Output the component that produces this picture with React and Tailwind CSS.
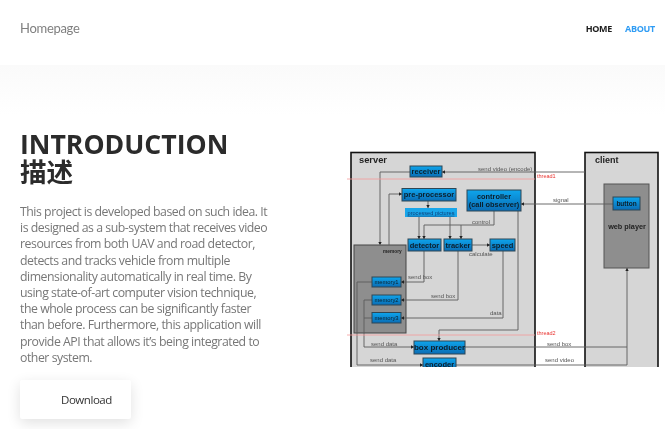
import React from "react";

function Box({x, y, w, h, label, size = 7.5, bold = true}) {
    return (
        <g>
            <rect x={x} y={y} width={w} height={h} fill="url(#blue)" stroke="#2f4654" strokeWidth="1"/>
            <text x={x + w / 2} y={y + h / 2 + size * 0.35} textAnchor="middle" fontSize={size}
                  fontWeight={bold ? "700" : "400"} fill="#0b1f2c">{label}</text>
        </g>
    )
}

function Label({x, y, children, color = "#555", size = 6}) {
    return <text x={x} y={y} fontSize={size} fill={color}>{children}</text>
}

// small arrow head, dir is the way it points
function Head({x, y, dir}) {
    const pts = {
        r: `${x},${y} ${x - 3},${y - 1.7} ${x - 3},${y + 1.7}`,
        l: `${x},${y} ${x + 3},${y - 1.7} ${x + 3},${y + 1.7}`,
        d: `${x},${y} ${x - 1.7},${y - 3} ${x + 1.7},${y - 3}`,
        u: `${x},${y} ${x - 1.7},${y + 3} ${x + 1.7},${y + 3}`,
    }
    return <polygon points={pts[dir]} fill="#222"/>
}

function Diagram() {
    return (
        <svg viewBox="345 150 320 218" width="320" height="218"
             className="block shrink-0 mt-[19px] blur-[0.5px] font-['Liberation_Sans',sans-serif]">
            <defs>
                <linearGradient id="blue" x1="0" y1="0" x2="0" y2="1">
                    <stop offset="0" stopColor="#0ea5ec"/>
                    <stop offset="1" stopColor="#0a6cb4"/>
                </linearGradient>
            </defs>

            <rect x="351" y="153.5" width="184" height="230" fill="#d6d6d6" stroke="#111" strokeWidth="1.6"/>
            <rect x="585" y="153.5" width="73" height="230" fill="#d6d6d6" stroke="#111" strokeWidth="1.6"/>
            <rect x="604" y="185" width="45" height="84" fill="#8e8e8e" stroke="#555" strokeWidth="1"/>
            <rect x="354" y="246" width="52" height="88" fill="#8e8e8e" stroke="#444" strokeWidth="1"/>

            <text x="359" y="164" fontSize="9.3" fontWeight="700" fill="#222">server</text>
            <text x="595" y="164" fontSize="9" fontWeight="700" fill="#222">client</text>
            <text x="627" y="230" fontSize="7.3" fontWeight="700" fill="#222" textAnchor="middle">web player</text>
            <text x="383" y="254" fontSize="4.8" fontWeight="700" fill="#222">memory</text>

            <g fill="none" stroke="#5c5c5c" strokeWidth="0.9">
                <path d="M585 173H442"/>
                <path d="M410 173H380V245"/>
                <path d="M389 246V195H402"/>
                <path d="M428 202V209"/>
                <path d="M419 218V240"/>
                <path d="M450 218V240"/>
                <path d="M494 212V226H424V240"/>
                <path d="M461 226V240"/>
                <path d="M472 246H490"/>
                <path d="M613 205H521"/>
                <path d="M424 252V283H401"/>
                <path d="M458 252V301H401"/>
                <path d="M503 252V319H401"/>
                <path d="M518 212V331H439V342"/>
                <path d="M372 283H357V366H423"/>
                <path d="M372 301H364V348H414"/>
                <path d="M372 319H364"/>
                <path d="M465 348H627"/>
                <path d="M456 366H627V269"/>
            </g>
            <path d="M347 180H535" stroke="#f59a9a" strokeWidth="0.8"/>
            <path d="M347 336H535" stroke="#f59a9a" strokeWidth="0.8"/>

            <Head x={442} y={173} dir="l"/>
            <Head x={380} y={246} dir="d"/>
            <Head x={402} y={195} dir="r"/>
            <Head x={428} y={209} dir="d"/>
            <Head x={419} y={240} dir="d"/>
            <Head x={450} y={240} dir="d"/>
            <Head x={424} y={240} dir="d"/>
            <Head x={461} y={240} dir="d"/>
            <Head x={490} y={246} dir="r"/>
            <Head x={521} y={205} dir="l"/>
            <Head x={401} y={283} dir="l"/>
            <Head x={401} y={301} dir="l"/>
            <Head x={401} y={319} dir="l"/>
            <Head x={439} y={342} dir="d"/>
            <Head x={423} y={366} dir="r"/>
            <Head x={414} y={348} dir="r"/>
            <Head x={627} y={269} dir="u"/>

            <Box x={410} y={167} w={32} h={11} label="receiver"/>
            <Box x={402} y={189.5} w={54} h={12.5} label="pre-processor"/>
            <rect x="405" y="209" width="52" height="9" fill="#19a6ea"/>
            <text x="431" y="215.8" textAnchor="middle" fontSize="5.6" fill="#0d3f78" textDecoration="underline">processed pictures</text>
            <rect x="467" y="191" width="54" height="21" fill="url(#blue)" stroke="#2f4654"/>
            <text x="494" y="199.5" textAnchor="middle" fontSize="7.4" fontWeight="700" fill="#0b1f2c">controller</text>
            <text x="494" y="208" textAnchor="middle" fontSize="7.4" fontWeight="700" fill="#0b1f2c">(call observer)</text>
            <Box x={613} y={198} w={27} h={13} label="button" size={6.5}/>
            <Box x={408} y={240} w={33} h={12} label="detector"/>
            <Box x={444} y={240} w={28} h={12} label="tracker"/>
            <Box x={490} y={240} w={25} h={12} label="speed"/>
            <Box x={372} y={278} w={29} h={10} label="memory1" size={5.8} bold={false}/>
            <Box x={372} y={296} w={29} h={10} label="memory2" size={5.8} bold={false}/>
            <Box x={372} y={313.5} w={29} h={10.5} label="memory3" size={5.8} bold={false}/>
            <Box x={414} y={342} w={51} h={13} label="box producer" size={8}/>
            <Box x={423} y={359} w={33} h={13} label="encoder"/>

            <Label x={478} y={172}>send video (encode)</Label>
            <Label x={553} y={203}>signal</Label>
            <Label x={472} y={225}>control</Label>
            <Label x={469} y={257}>calculate</Label>
            <Label x={408} y={280}>send  box</Label>
            <Label x={431} y={299}>send box</Label>
            <Label x={490} y={316}>data</Label>
            <Label x={371} y={347}>send data</Label>
            <Label x={370} y={363}>send data</Label>
            <Label x={547} y={347}>send box</Label>
            <Label x={545} y={363}>send video</Label>
            <Label x={537} y={179} color="#e8322e" size={5.5}>thread1</Label>
            <Label x={537} y={336} color="#e8322e" size={5.5}>thread2</Label>
        </svg>
    )
}

export default function App() {
    return (
        <div className="h-screen overflow-hidden bg-white font-['Open_Sans',sans-serif] blur-[0.4px]">
            <header className="h-[65px] pb-2 pl-5 pr-[10px] flex items-center justify-between">
                <span className="font-['Lato',sans-serif] text-[13px] tracking-[-0.3px] text-[#808080]">Homepage</span>
                <nav className="flex gap-[13px] text-[9px] tracking-[-0.3px] font-bold">
                    <a className="text-[#1a1a1a]">HOME</a>
                    <a className="text-[#2f9cf4]">ABOUT</a>
                </nav>
            </header>

            <section className="flex items-start pt-[65px] bg-linear-to-b from-[#fafafa] to-white to-[50px]">
                <div className="w-[345px] shrink-0 pl-5">
                    <h1 className="font-bold text-[26.6px] leading-[28px] text-[#2b2b2b] font-['Open_Sans','Noto_Sans_CJK_SC',sans-serif]">
                        INTRODUCTION<br/>描述
                    </h1>
                    <p className="mt-[18px] w-[252px] text-[12.3px] tracking-[-0.47px] leading-[16.2px] text-[#777]">
                        This project is developed based on such idea. It is designed as a sub-system that receives video
                        resources from both UAV and road detector, detects and tracks vehicle from multiple
                        dimensionality automatically in real time. By using state-of-art computer vision technique,
                        the whole process can be significantly faster than before. Furthermore, this application will
                        provide API that allows it’s being integrated to other system.
                    </p>
                    <button className="mt-[14px] w-[111px] h-[39px] bg-white rounded-[2px] shadow-[0_4px_14px_rgba(0,0,0,0.12)] text-[11.5px] tracking-[-0.45px] text-[#333] pl-[41px] text-left">
                        Download
                    </button>
                </div>
                <Diagram/>
            </section>
        </div>
    )
}
